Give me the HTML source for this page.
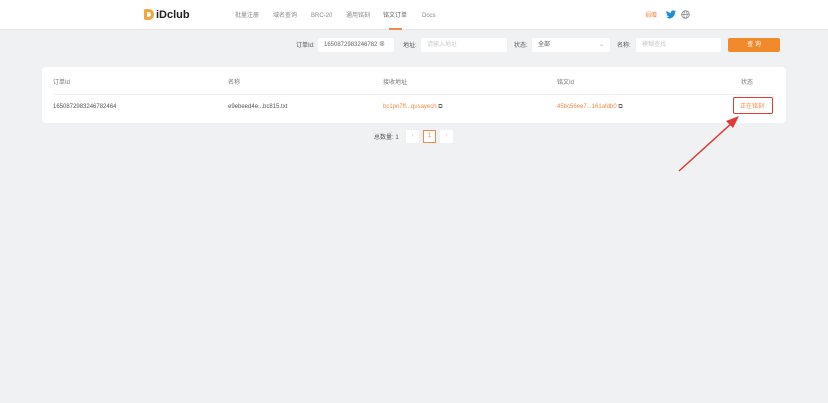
<!DOCTYPE html><html><head><meta charset="utf-8"><style>
*{margin:0;padding:0;box-sizing:border-box}
body{width:828px;height:403px;background:#f0f1f3;font-family:"Liberation Sans","Noto Sans CJK SC",sans-serif;font-size:6px;line-height:8px;color:#555;position:relative;overflow:hidden}
.a{position:absolute;white-space:nowrap;line-height:8px}
.hdr{position:absolute;left:0;top:0;width:828px;height:30px;background:#fff;border-bottom:1px solid #e6e6e6}
.in{position:absolute;height:14px;background:#fff;border-radius:2px;font-size:6px;line-height:14px;padding-left:6px;color:#666}
.card{position:absolute;left:42px;top:67px;width:744px;height:56px;background:#fff;border-radius:4px}
.or{color:#f08a4b}
</style></head><body>
<div class="hdr"></div>
<div class="a" style="left:144px;top:9px;width:10px;height:11px;background:#f5a33b;border-radius:2px 6px 6px 2px"></div>
<div class="a" style="left:147px;top:12px;width:4px;height:5px;background:#fff;border-radius:0 3px 3px 0"></div>
<div class="a" style="left:156px;top:9px;font-size:11px;line-height:12px;font-weight:bold;color:#222">iDclub</div>
<div class="a" style="left:235px;top:12px;color:#888">批量注册</div>
<div class="a" style="left:273px;top:12px;color:#888">域名查询</div>
<div class="a" style="left:311px;top:12px;color:#888">BRC-20</div>
<div class="a" style="left:346px;top:12px;color:#888">通用铭刻</div>
<div class="a" style="left:383px;top:12px;color:#666">铭文订单</div>
<div class="a" style="left:389px;top:28px;width:13px;height:2px;background:#f08a4b"></div>
<div class="a" style="left:422px;top:12px;color:#888">Docs</div>
<div class="a or" style="left:645px;top:12px">捐赠</div>
<svg class="a" style="left:666px;top:10px" width="10" height="9" viewBox="0 0 24 20"><path d="M24 2.4c-.9.4-1.8.7-2.8.8 1-.6 1.8-1.6 2.2-2.7-1 .6-2 1-3.1 1.2A4.9 4.9 0 0 0 11.9 6 14 14 0 0 1 1.7.9a4.9 4.9 0 0 0 1.5 6.6c-.8 0-1.6-.2-2.2-.6 0 2.4 1.7 4.4 3.9 4.8-.7.2-1.5.2-2.2.1.6 2 2.400 3.4 4.6 3.4A9.9 9.9 0 0 1 0 17.3 14 14 0 0 0 7.5 19.5c9.1 0 14-7.5 14-14v-.6c1-.7 1.8-1.6 2.5-2.5z" fill="#1d8fd8"/></svg>
<svg class="a" style="left:681px;top:10px" width="9" height="9" viewBox="0 0 10 10"><circle cx="5" cy="5" r="4.2" fill="none" stroke="#888" stroke-width="0.9"/><ellipse cx="5" cy="5" rx="1.8" ry="4.2" fill="none" stroke="#888" stroke-width="0.8"/><line x1="0.8" y1="5" x2="9.2" y2="5" stroke="#888" stroke-width="0.8"/></svg>
<div class="a" style="left:296px;top:42px">订单Id:</div>
<div class="in" style="left:318px;top:38px;width:76px">1650872983246782 ⊗</div>
<div class="a" style="left:403px;top:42px">地址:</div>
<div class="in" style="left:421px;top:38px;width:86px;color:#ccc">请输入地址</div>
<div class="a" style="left:514px;top:42px">状态:</div>
<div class="in" style="left:532px;top:38px;width:78px;color:#555">全部<span style="position:absolute;right:6px;color:#aaa">⌄</span></div>
<div class="a" style="left:617px;top:42px">名称:</div>
<div class="in" style="left:636px;top:38px;width:85px;color:#ccc">模糊查找</div>
<div class="a" style="left:728px;top:38px;width:52px;height:14px;background:#f08a2b;border-radius:2px;color:#fff;text-align:center;line-height:14px">查 询</div>
<div class="card"></div>
<div class="a" style="left:54px;top:94px;width:720px;height:1px;background:#eee"></div>
<div class="a" style="left:53px;top:79px;color:#777">订单Id</div>
<div class="a" style="left:228px;top:79px;color:#777">名称</div>
<div class="a" style="left:383px;top:79px;color:#777">接收地址</div>
<div class="a" style="left:557px;top:79px;color:#777">铭文Id</div>
<div class="a" style="left:741px;top:79px;color:#777">状态</div>
<div class="a" style="left:53px;top:103px">1650872983246782464</div>
<div class="a" style="left:228px;top:103px">e9ebeed4e...bc815.txt</div>
<div class="a or" style="left:383px;top:103px">bc1pn7ff...qusayech <span style="color:#555">⧉</span></div>
<div class="a or" style="left:557px;top:103px">45bc56ee7...161afdb0 <span style="color:#555">⧉</span></div>
<div class="a" style="left:733px;top:97px;width:40px;height:17px;border:1.5px solid #e53935;border-radius:2px"></div>
<div class="a or" style="left:740px;top:103px">正在铭刻</div>
<div class="a" style="left:374px;top:134px">总数量: 1</div>
<div class="a" style="left:406px;top:130px;width:13px;height:13px;background:#fff;color:#ccc;text-align:center;line-height:13px">‹</div>
<div class="a" style="left:423px;top:130px;width:13px;height:13px;background:#fff;border:1px solid #f08a4b;color:#f08a4b;text-align:center;line-height:11px">1</div>
<div class="a" style="left:440px;top:130px;width:13px;height:13px;background:#fff;color:#ccc;text-align:center;line-height:13px">›</div>
<svg class="a" style="left:0;top:0" width="828" height="403"><line x1="679" y1="171" x2="733" y2="122" stroke="#e53935" stroke-width="1.5"/><polygon points="739,116 726,121 733,128" fill="#e53935"/></svg>
</body></html>
